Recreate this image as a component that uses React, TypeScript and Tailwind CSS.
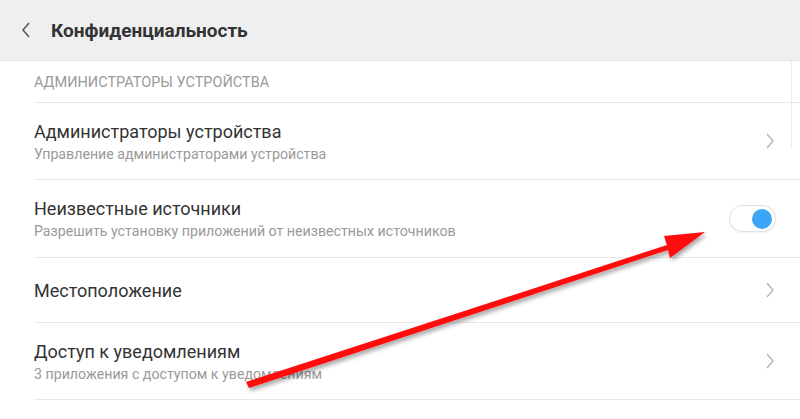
import React from "react";

const Chevron = () => (
  <svg width="10" height="18" viewBox="0 0 10 18" className="shrink-0">
    <path d="M2 2 L8 9 L2 16" fill="none" stroke="#b5b5b5" strokeWidth="1.4" />
  </svg>
);

const Row = ({ title, sub, right, h }: { title: string; sub?: string; right: React.ReactNode; h: string }) => (
  <div className={`flex items-center border-b border-[#e8e8e8] pr-[25px] ${h}`}>
    <div className="flex-1 flex flex-col pt-[2px]">
      <div className="text-[18px] leading-[22px] text-[#333]">{title}</div>
      {sub && <div className="text-[14.2px] leading-[20px] text-[#9a9a9a] mt-[1px]">{sub}</div>}
    </div>
    {right}
  </div>
);

export default function App() {
  return (
    <div className="relative w-[800px] h-[419px] bg-white overflow-hidden" style={{ fontFamily: "Roboto, 'Noto Sans', sans-serif" }}>
      <div className="h-[61px] bg-[#efefef] border-b border-[#e2e2e2] flex items-center pl-[20px]">
        <svg width="12" height="18" viewBox="0 0 12 18" className="mr-[19px]">
          <path d="M9 2 L3 9 L9 16" fill="none" stroke="#555" strokeWidth="1.5" />
        </svg>
        <div className="text-[19px] font-bold text-[#333] pt-[2px]">Конфиденциальность</div>
      </div>
      <div className="relative pl-[34px]">
        <div className="h-[42px] flex items-center border-b border-[#e8e8e8] text-[14.5px] text-[#9a9a9a] pt-[2px]">
          АДМИНИСТРАТОРЫ УСТРОЙСТВА
        </div>
        <Row h="h-[77px]" title="Администраторы устройства" sub="Управление администраторами устройства" right={<Chevron />} />
        <Row
          h="h-[78px]"
          title="Неизвестные источники"
          sub="Разрешить установку приложений от неизвестных источников"
          right={
            <div className="w-[47px] h-[27px] rounded-full border border-[#dedede] bg-white shadow-[0_1px_2px_rgba(0,0,0,0.06)] flex items-center justify-end pr-[3px] -mr-[1px]">
              <div className="w-[20px] h-[20px] rounded-full bg-[#3aa6f5]" />
            </div>
          }
        />
        <Row h="h-[65px]" title="Местоположение" right={<Chevron />} />
        <Row h="h-[77px]" title="Доступ к уведомлениям" sub="3 приложения с доступом к уведомлениям" right={<Chevron />} />
        <div className="absolute right-[8px] top-0 w-[1px] h-[88px] bg-[#ececec]" />
      </div>
      <svg className="absolute left-0 top-0" width="800" height="419" viewBox="0 0 800 419">
        <defs>
          <filter id="sh" x="-10%" y="-10%" width="120%" height="120%">
            <feDropShadow dx="2" dy="3" stdDeviation="2" floodColor="#000" floodOpacity="0.35" />
          </filter>
        </defs>
        <g filter="url(#sh)">
          <polygon points="246,382 667,245 664,236 705,232 670,258 668,250 249,388" fill="#ff0a0a" />
        </g>
      </svg>
    </div>
  );
}
